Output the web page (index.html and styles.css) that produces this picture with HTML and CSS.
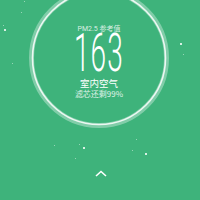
FILE: index.html
```html
<!DOCTYPE html>
<html>
<head>
<meta charset="utf-8">
<link rel="stylesheet" href="styles.css">
</head>
<body>
<div class="screen">
  <div class="dial">
    <svg class="ring" width="140" height="140" viewBox="0 0 140 140">
      <circle cx="70" cy="70" r="67.5" fill="none" stroke="rgba(255,255,255,0.35)" stroke-width="5"/>
      <circle cx="70" cy="70" r="66.5" fill="none" stroke="rgba(255,255,255,0.85)" stroke-width="1.6"/>
    </svg>
    <div class="readout">
      <div class="label">PM2.5 参考值</div>
      <div class="value"><span>163</span></div>
      <div class="place">室内空气</div>
      <div class="filter">滤芯还剩99%</div>
    </div>
  </div>
  <div class="footer">
    <svg width="12" height="7" viewBox="0 0 12 7"><path d="M1 6 L6 1.5 L11 6" fill="none" stroke="#fff" stroke-width="1.6"/></svg>
  </div>
  <i class="star b" style="left:4px;top:29px"></i>
  <i class="star" style="left:3px;top:25px"></i>
  <i class="star" style="left:21px;top:12px"></i>
  <i class="star" style="left:24px;top:1px"></i>
  <i class="star b" style="left:180px;top:43px"></i>
  <i class="star" style="left:183px;top:54px"></i>
  <i class="star" style="left:12px;top:63px"></i>
  <i class="star" style="left:54px;top:145px"></i>
  <i class="star" style="left:79px;top:144px"></i>
  <i class="star b" style="left:83px;top:147px"></i>
  <i class="star" style="left:75px;top:158px"></i>
  <i class="star" style="left:136px;top:139px"></i>
  <i class="star" style="left:132px;top:150px"></i>
  <i class="star b" style="left:145px;top:153px"></i>
</div>
</body>
</html>
```
FILE: styles.css
```css
html, body {
  margin: 0;
  padding: 0;
}
body {
  background: #3eb37b;
  font-family: Roboto, "Noto Sans CJK SC", sans-serif;
  color: #fff;
}
.screen {
  position: relative;
  width: 200px;
  height: 200px;
  overflow: hidden;
  background: #3eb37b;
}
.dial {
  position: relative;
  width: 140px;
  height: 140px;
  margin: -12px 0 0 29px;
}
.ring {
  position: absolute;
  left: 0;
  top: 0;
}
.readout {
  display: flex;
  flex-direction: column;
  align-items: center;
  padding-top: 37px;
}
.label {
  font-size: 7px;
  line-height: 8px;
  color: rgba(255,255,255,0.8);
}
.value {
  font-size: 54px;
  line-height: 40px;
  height: 40px;
  font-weight: 300;
  letter-spacing: 2px;
}
.value span {
  display: inline-block;
  transform: scaleX(0.52);
}
.place {
  margin-top: 4px;
  font-size: 9.5px;
  line-height: 12px;
  font-family: "Noto Sans CJK SC", sans-serif;
}
.filter {
  font-size: 8px;
  line-height: 10px;
  font-family: "Noto Sans CJK SC", sans-serif;
  color: rgba(255,255,255,0.85);
}
.footer {
  display: flex;
  justify-content: center;
  margin-top: 42px;
  padding-left: 1px;
}
.footer svg {
  display: block;
}
.star {
  position: absolute;
  width: 1px;
  height: 1px;
  background: rgba(255,255,255,0.45);
}
.star.b {
  width: 2px;
  height: 2px;
  background: rgba(255,255,255,0.8);
}
```
